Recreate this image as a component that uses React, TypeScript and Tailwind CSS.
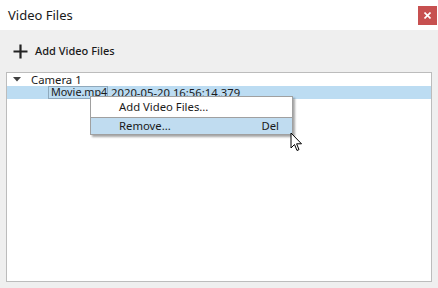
import React from "react";

function Cursor() {
  return (
    <svg width="13" height="20" viewBox="0 0 13 20" className="absolute left-[290px] top-[132px]">
      <path
        d="M1 1 L1 16 L4.5 12.5 L7 18.5 L9 17.6 L6.6 11.8 L11.5 11.8 Z"
        fill="white"
        stroke="black"
        strokeWidth="1"
        strokeLinejoin="miter"
      />
    </svg>
  );
}

export default function App() {
  return (
    <div className="relative w-[438px] h-[288px] bg-[#efefef] flex flex-col font-['Noto_Sans',sans-serif] text-[#1a1a1a]">
      {/* title bar */}
      <div className="h-[30px] bg-white flex items-center justify-between pl-[8px] pr-[1px]">
        <span className="text-[13px] leading-none">Video Files</span>
        <button className="w-[19px] h-[19px] bg-[#c75050] flex items-center justify-center">
          <svg width="7" height="7" viewBox="0 0 7 7">
            <path d="M0.5 0.5 L6.5 6.5 M6.5 0.5 L0.5 6.5" stroke="white" strokeWidth="1.6" />
          </svg>
        </button>
      </div>

      {/* toolbar */}
      <div className="h-[42px] flex items-center pl-[13px] gap-[7px]">
        <svg width="15" height="15" viewBox="0 0 15 15">
          <path d="M7.5 0.5 V14.5 M0.5 7.5 H14.5" stroke="#222" strokeWidth="2.2" />
        </svg>
        <span className="text-[11px] font-medium">Add Video Files</span>
      </div>

      {/* tree */}
      <div className="mx-[6px] h-[210px] border border-[#bcbcbc] bg-white flex flex-col text-[11.3px] leading-none">
        <div className="h-[13px] flex items-center">
          <svg width="8" height="5" viewBox="0 0 8 5" className="ml-[6px]">
            <path d="M0 0 H8 L4 4.5 Z" fill="#404040" />
          </svg>
          <span className="ml-[10px]">Camera 1</span>
        </div>
        <div className="h-[13px] bg-[#bcdcf2] flex items-stretch">
          <span className="ml-[41px] w-[60px] shrink-0 border border-[#8fa9bc] flex items-center pl-[2px] whitespace-nowrap text-[10.8px]">Movie.mp4</span>
          <span className="ml-[3px] flex items-center whitespace-nowrap">2020-05-20 16:56:14.379</span>
        </div>
      </div>

      {/* context menu */}
      <div className="absolute left-[90px] top-[96px] w-[203px] border border-[#a0a0a0] bg-white shadow-[2px_2px_2px_rgba(0,0,0,0.35)] flex flex-col text-[11.3px]">
        <div className="h-[20px] flex items-center pl-[28px]">Add Video Files...</div>
        <div className="h-[17px] bg-[#c0dcf0] border-t border-[#a0a0a0] flex items-center justify-between pl-[28px] pr-[13px]">
          <span>Remove...</span>
          <span>Del</span>
        </div>
      </div>

      <Cursor />
    </div>
  );
}
